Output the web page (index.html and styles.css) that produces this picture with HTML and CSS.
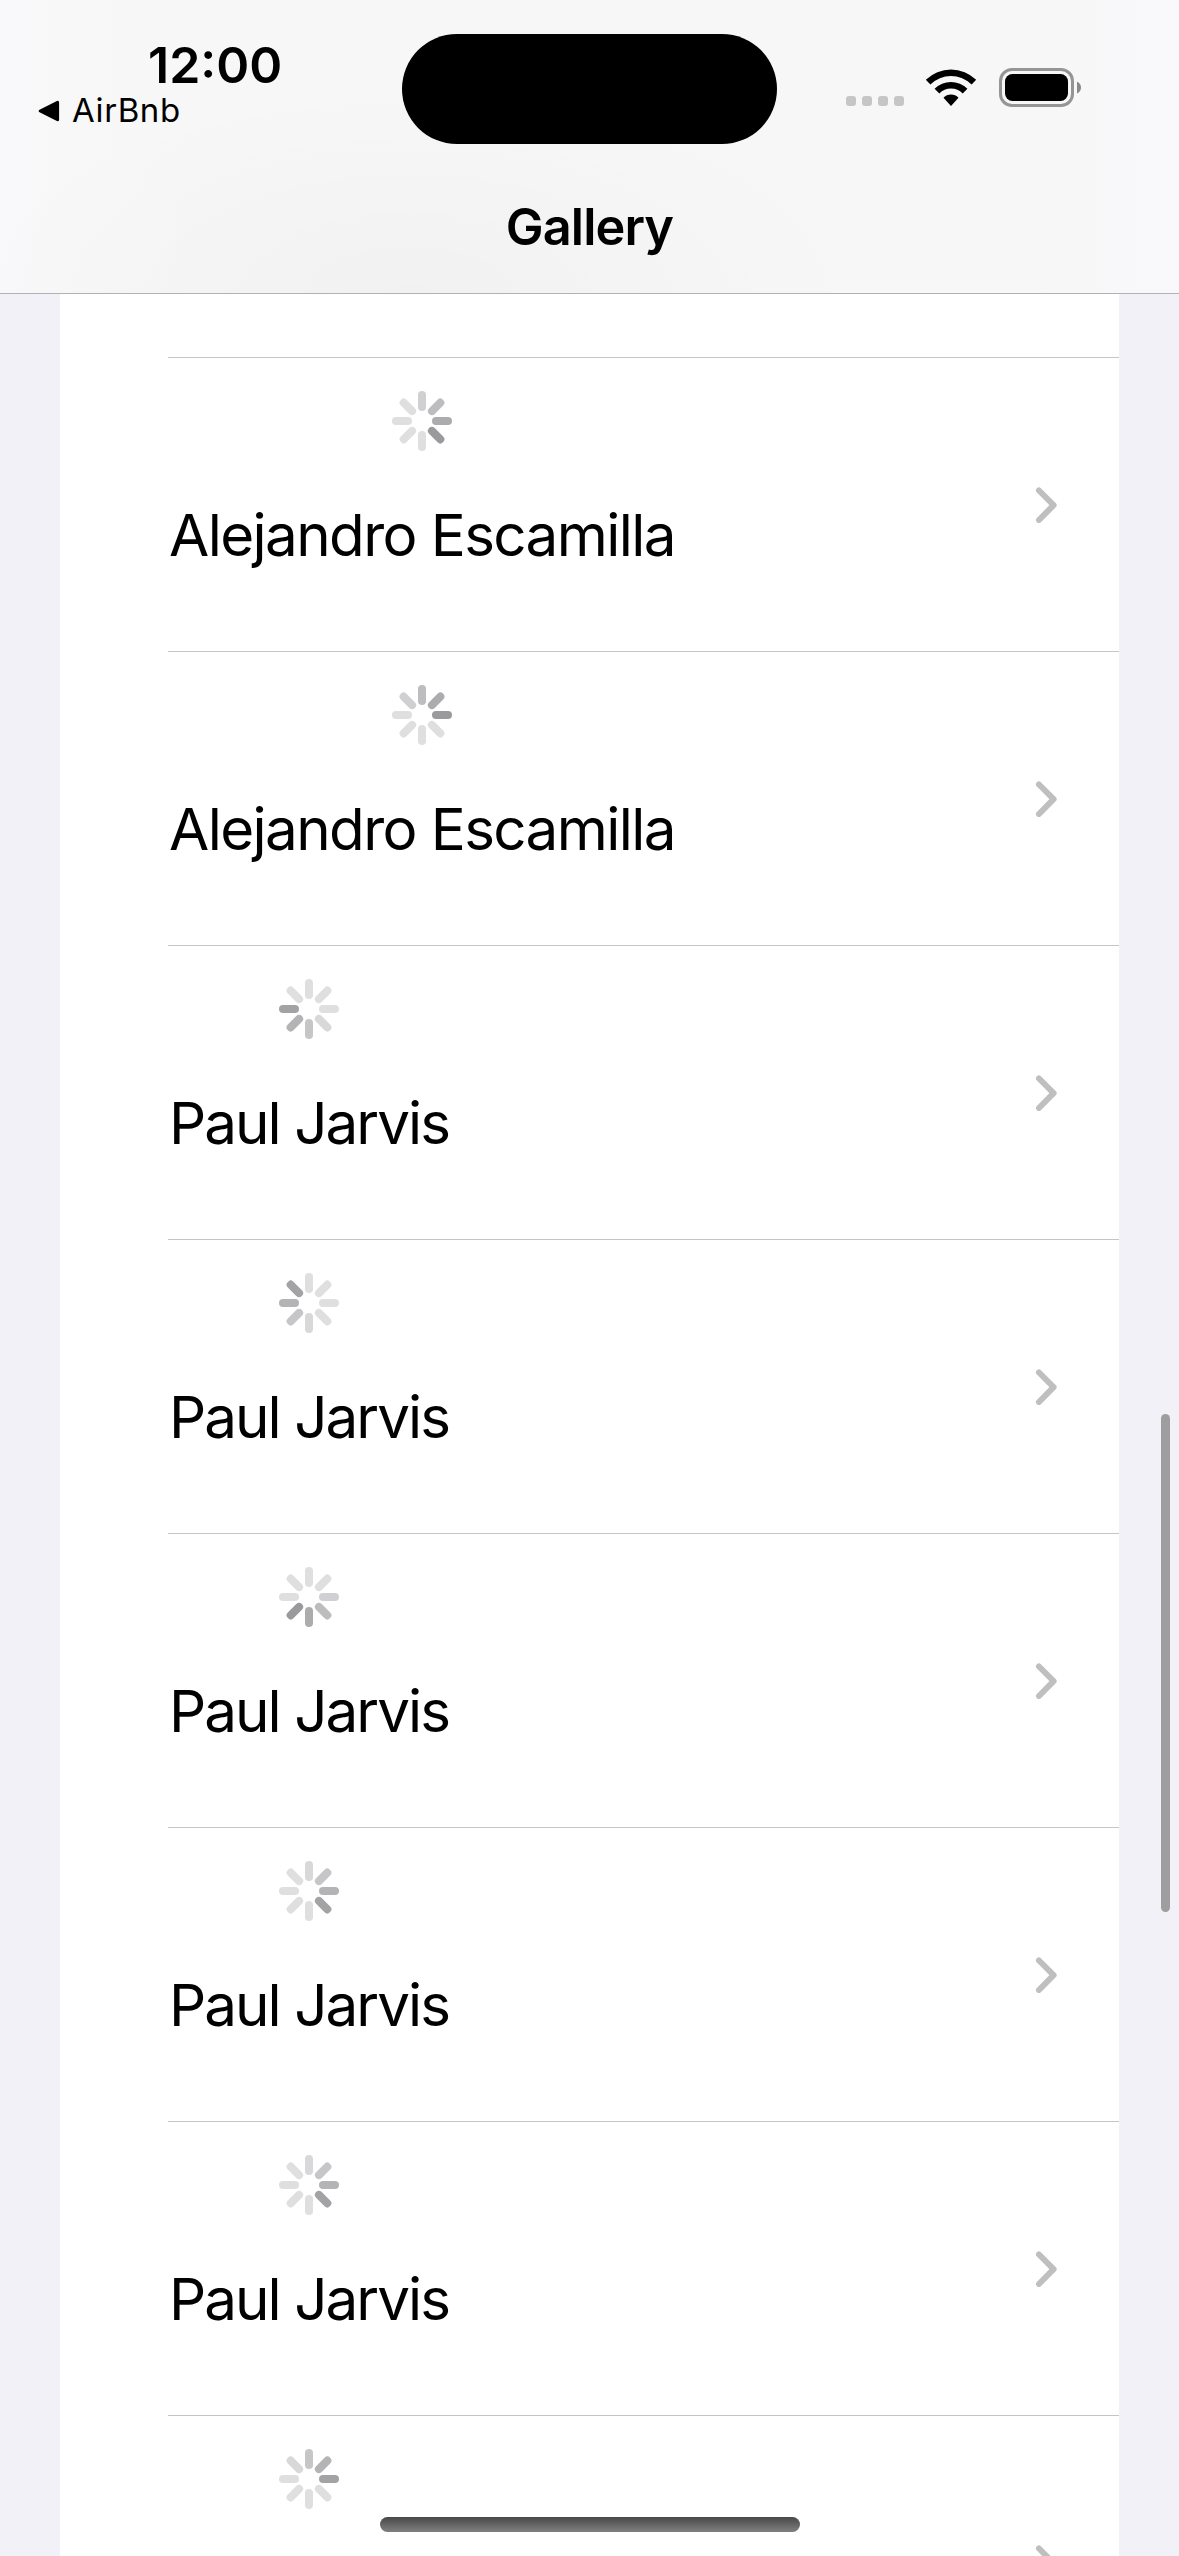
FILE: index.html
```
<!DOCTYPE html>
<html lang="en">
<head>
<meta charset="utf-8">
<title>Gallery</title>
<link rel="stylesheet" href="styles.css">
</head>
<body>
<svg class="defs" width="0" height="0" aria-hidden="true">
  <!-- spinner whose darkest arm points east, fading counter-clockwise -->
  <symbol id="spinner" viewBox="-30 -30 60 60">
    <g fill="none" stroke="#dfdfdf" stroke-width="8" stroke-linecap="round">
      <path d="M14 0H26" class="arm-1"/>
      <path d="M14 0H26" transform="rotate(-45)" class="arm-2"/>
      <path d="M14 0H26" transform="rotate(-90)" class="arm-3"/>
      <path d="M14 0H26" transform="rotate(-135)" class="arm-4"/>
      <path d="M14 0H26" transform="rotate(180)"/>
      <path d="M14 0H26" transform="rotate(135)"/>
      <path d="M14 0H26" transform="rotate(90)"/>
      <path d="M14 0H26" transform="rotate(45)"/>
    </g>
  </symbol>
  <symbol id="chevron" viewBox="0 0 22 36">
    <path d="M4 3.5L18.6 18.2L4 33" fill="none" stroke="#bfbfbf" stroke-width="6" stroke-linecap="round" stroke-linejoin="round"/>
  </symbol>
</svg>

<header class="header">
  <div class="status">
    <div class="status-left">
      <div class="time">12:00</div>
      <div class="back">
        <svg width="22" height="22" viewBox="0 0 22 22"><path d="M2.2 11L19.6 2.3V19.7Z" stroke="#000" stroke-width="3" stroke-linejoin="round"/></svg>
        <span>AirBnb</span>
      </div>
    </div>
    <div class="island"></div>
    <div class="status-right">
      <div class="dots"><i></i><i></i><i></i><i></i></div>
      <svg class="wifi" width="52" height="38" viewBox="0 0 52 38">
        <path d="M0.8 10.8A36 36 0 0 1 51.2 10.8L46.6 15.4A29.3 29.3 0 0 0 5.4 15.4Z"/>
        <path d="M9.6 19.7A23.2 23.2 0 0 1 42.4 19.7L37.7 24.4A16.6 16.6 0 0 0 14.3 24.4Z"/>
        <path d="M18.5 28.7A10.6 10.6 0 0 1 33.5 28.7L26 37Z"/>
      </svg>
      <svg class="battery" width="82" height="39" viewBox="0 0 82 39">
        <rect x="1.5" y="1.5" width="72" height="36" rx="11.5" fill="none" stroke="#959595" stroke-width="3"/>
        <rect x="6" y="6" width="63" height="27" rx="7.5"/>
        <path d="M78 13.5Q82 15.5 82 19.5Q82 23.5 78 25.5Z" fill="#8a8a8a"/>
      </svg>
    </div>
  </div>
  <h1 class="title">Gallery</h1>
</header>

<main class="list">
  <div class="row-tail"></div>
  <div class="row"><div class="cell wide"><svg class="spinner se"><use href="#spinner"/></svg><span class="name">Alejandro Escamilla</span></div><svg class="chevron"><use href="#chevron"/></svg></div>
  <div class="row"><div class="cell wide"><svg class="spinner"><use href="#spinner"/></svg><span class="name">Alejandro Escamilla</span></div><svg class="chevron"><use href="#chevron"/></svg></div>
  <div class="row"><div class="cell"><svg class="spinner w soft"><use href="#spinner"/></svg><span class="name">Paul Jarvis</span></div><svg class="chevron"><use href="#chevron"/></svg></div>
  <div class="row"><div class="cell"><svg class="spinner nw soft"><use href="#spinner"/></svg><span class="name">Paul Jarvis</span></div><svg class="chevron"><use href="#chevron"/></svg></div>
  <div class="row"><div class="cell"><svg class="spinner sw"><use href="#spinner"/></svg><span class="name">Paul Jarvis</span></div><svg class="chevron"><use href="#chevron"/></svg></div>
  <div class="row"><div class="cell"><svg class="spinner se soft"><use href="#spinner"/></svg><span class="name">Paul Jarvis</span></div><svg class="chevron"><use href="#chevron"/></svg></div>
  <div class="row"><div class="cell"><svg class="spinner se soft"><use href="#spinner"/></svg><span class="name">Paul Jarvis</span></div><svg class="chevron"><use href="#chevron"/></svg></div>
  <div class="row"><div class="cell"><svg class="spinner soft"><use href="#spinner"/></svg></div><svg class="chevron"><use href="#chevron"/></svg></div>
</main>

<div class="scrollbar"></div>
<div class="home-indicator"></div>
</body>
</html>
```
FILE: styles.css
```
* { box-sizing: border-box; }

body {
  position: relative;
  margin: 0;
  width: 1179px;
  height: 2556px;
  overflow: hidden;
  display: flex;
  flex-direction: column;
  background: #f2f1f7;
  color: #000;
  font-family: Inter, "Liberation Sans", sans-serif;
}

svg { display: block; flex: none; }
.defs { position: absolute; }

/* header */
.header {
  flex: none;
  height: 294px;
  border-bottom: 1px solid #b2b2b4;
  background:
    radial-gradient(ellipse 460px 210px at 410px 294px, rgba(0, 0, 0, .024), rgba(0, 0, 0, 0)),
    linear-gradient(90deg, #f9f9fc 0, #f8f8f8 70px, #f7f7f7 200px, #f7f7f7 1040px, #f8f8fa 1120px, #f9f9fc 100%);
}

.status {
  display: grid;
  grid-template-columns: 402px 375px 1fr;
  align-items: start;
  height: 160px;
}

.status-left { padding-top: 35px; }

.time {
  padding-left: 148px;
  font-size: 50px;
  font-weight: 600;
  line-height: 60px;
}

.back {
  display: flex;
  align-items: center;
  gap: 12px;
  padding-left: 38px;
  font-size: 33px;
  line-height: 31px;
  letter-spacing: .6px;
}

.island {
  height: 110px;
  margin-top: 34px;
  border-radius: 55px;
  background: #000;
}

.status-right {
  display: flex;
  align-items: flex-end;
  height: 107px;
  padding-left: 69px;
}

.dots { display: flex; gap: 6px; margin-bottom: 1px; }
.dots i { width: 10px; height: 10px; border-radius: 3px; background: #c6c6c6; }
.wifi { margin: 0 22px 0 21px; }

.title {
  margin: 0;
  font-size: 50.5px;
  font-weight: 600;
  line-height: 134px;
  letter-spacing: -.9px;
  text-align: center;
}

/* list */
.list {
  flex: 1;
  min-height: 0;
  margin: 0 60px;
  padding-left: 108px;
  overflow: hidden;
  background: #fff;
}

.row-tail { height: 63px; }

.row {
  display: flex;
  align-items: center;
  justify-content: space-between;
  height: 294px;
  padding-right: 62px;
  border-top: 1px solid #c5c5c7;
}

.cell {
  display: flex;
  flex-direction: column;
  align-items: center;
  align-self: flex-start;
  width: 282px;
  padding-top: 33px;
}
.cell.wide { width: 508px; }

.name {
  margin-top: 48px;
  font-size: 58.3px;
  line-height: 72px;
  letter-spacing: -1.95px;
  white-space: nowrap;
}
.wide .name { letter-spacing: -1.6px; }

.chevron { width: 22px; height: 36px; }

/* spinner: rotation sets the direction of the darkest arm */
.spinner {
  width: 60px;
  height: 60px;
  --a1: #9a9a9c;
  --a2: #acacae;
  --a3: #bdbdbf;
  --a4: #d0d0d2;
}
.spinner.soft {
  --a1: #a3a3a5;
  --a2: #b4b4b6;
  --a3: #c6c6c8;
  --a4: #d8d8da;
}
.arm-1 { stroke: var(--a1); }
.arm-2 { stroke: var(--a2); }
.arm-3 { stroke: var(--a3); }
.arm-4 { stroke: var(--a4); }
.se { transform: rotate(45deg); }
.sw { transform: rotate(135deg); }
.w { transform: rotate(180deg); }
.nw { transform: rotate(225deg); }

/* system overlays */
.scrollbar {
  position: absolute;
  top: 1414px;
  right: 9px;
  width: 9px;
  height: 498px;
  border-radius: 5px;
  background: #9e9ea0;
}

.home-indicator {
  position: absolute;
  bottom: 24px;
  left: 380px;
  width: 420px;
  height: 15px;
  border-radius: 8px;
  background: linear-gradient(#484848, #808080);
}
```
